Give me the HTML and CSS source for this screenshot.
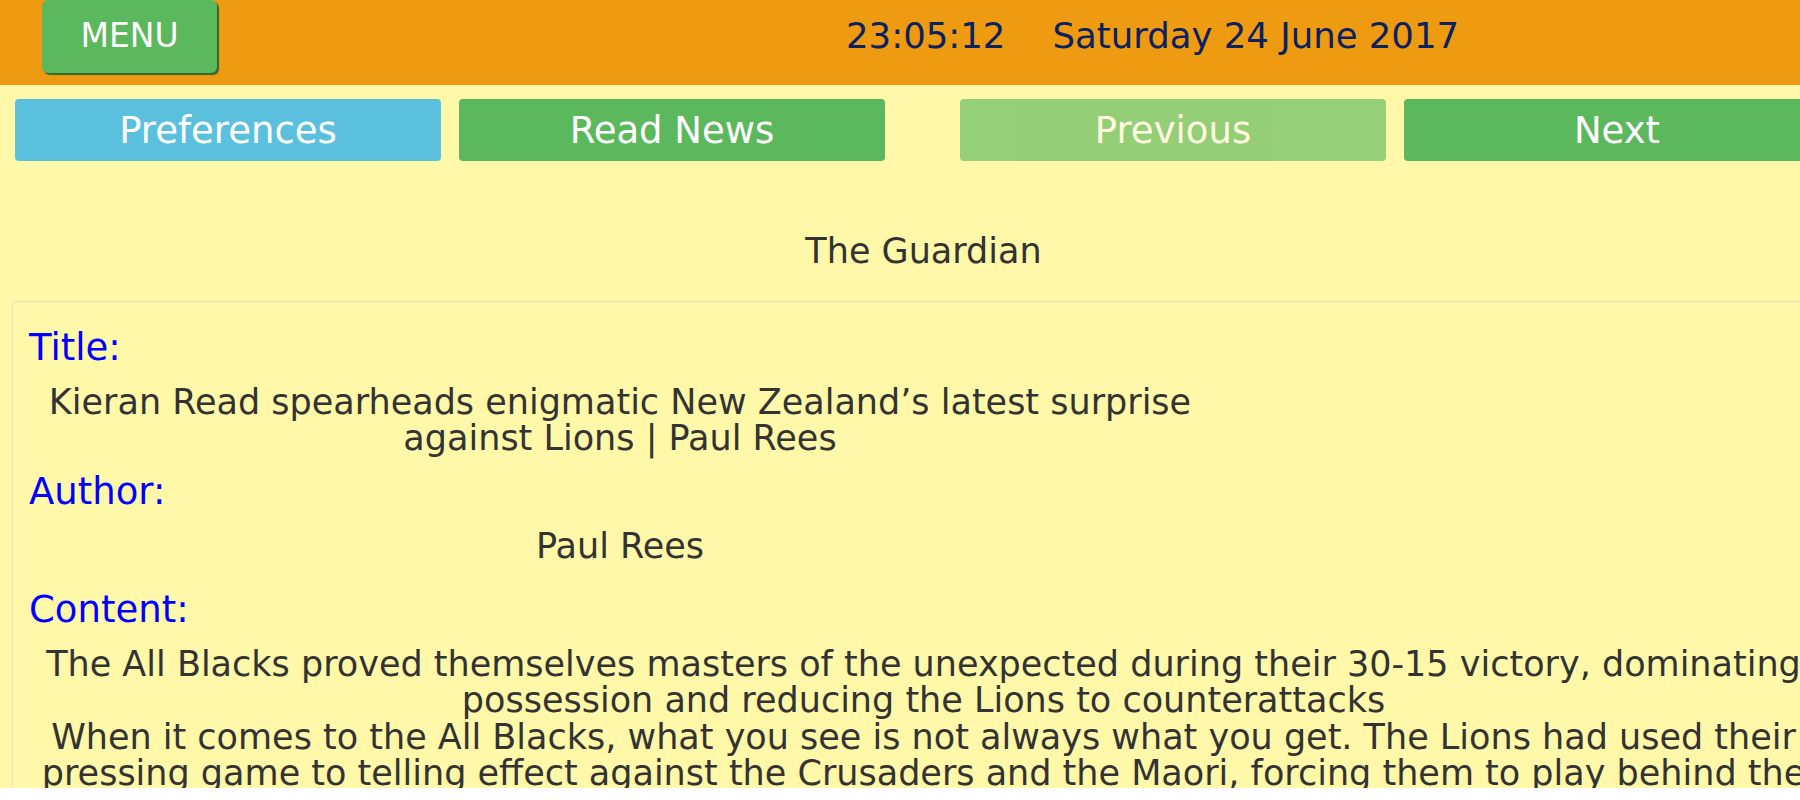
FILE: index.html
```html
<!DOCTYPE html>
<html lang="en">
<head>
<meta charset="utf-8">
<title>News Reader</title>
<link rel="stylesheet" href="styles.css">
</head>
<body>
<div class="viewport">
  <div class="page">
    <header class="topbar">
      <button class="menu-btn">MENU</button>
      <div class="clock"><span class="time">23:05:12</span><span class="date">Saturday 24 June 2017</span></div>
    </header>
    <nav class="actions">
      <div class="group">
        <a class="btn btn-info">Preferences</a>
        <a class="btn btn-success">Read News</a>
      </div>
      <div class="group">
        <a class="btn btn-success disabled">Previous</a>
        <a class="btn btn-success">Next</a>
      </div>
    </nav>
    <h2 class="source">The Guardian</h2>
    <section class="article">
      <div class="meta">
        <div class="main-col">
          <div class="label">Title:</div>
          <div class="value">Kieran Read spearheads enigmatic New Zealand’s latest surprise against Lions | Paul Rees</div>
          <div class="label">Author:</div>
          <div class="value value-last">Paul Rees</div>
        </div>
        <div class="side-col"></div>
      </div>
      <div class="label">Content:</div>
      <div class="content">The All Blacks proved themselves masters of the unexpected during their 30-15 victory, dominating possession and reducing the Lions to counterattacks<br>When it comes to the All Blacks, what you see is not always what you get. The Lions had used their pressing game to telling effect against the Crusaders and the Maori, forcing them to play behind the gain line and mistakes followed.</div>
    </section>
  </div>
</div>
</body>
</html>
```
FILE: styles.css
```css
html, body {
  margin: 0;
  padding: 0;
  background: #ffffff;
  overflow: hidden;
}

body {
  font-family: "DejaVu Sans", "Liberation Sans", sans-serif;
  color: #333333;
}

.viewport {
  height: 788px;
  overflow: hidden;
  background: #fff8a8;
}

.page {
  width: 1847px;
}

.topbar {
  height: 85px;
  background: #ee9b11;
  display: flex;
  align-items: flex-start;
  padding-left: 42px;
  box-sizing: border-box;
}

.menu-btn {
  width: 175px;
  height: 73px;
  background: #5cb85c;
  color: #ffffff;
  border: none;
  border-radius: 6px;
  box-shadow: 2px 2px 1px #2f6a2f;
  font-family: "DejaVu Sans", sans-serif;
  font-size: 33px;
  padding: 0 0 2px;
  cursor: pointer;
}

.clock {
  margin-left: 629px;
  padding-top: 16px;
  font-size: 35.5px;
  line-height: 40px;
  color: #0b2162;
  display: flex;
}

.time {
  margin-right: 47px;
}

.actions {
  display: flex;
  gap: 75px;
  padding: 14px 0 0 15px;
}

.group {
  display: flex;
  gap: 18px;
}

.btn {
  width: 426px;
  height: 62px;
  border-radius: 4px;
  color: #ffffff;
  font-size: 37px;
  display: flex;
  align-items: center;
  justify-content: center;
  cursor: pointer;
}

.btn-info {
  background: #5bc0de;
}

.btn-success {
  background: #5cb85c;
}

.btn.disabled {
  opacity: 0.65;
}

.source {
  margin: 72px 0 32px;
  text-align: center;
  font-size: 35px;
  line-height: 36px;
  font-weight: normal;
  color: #333333;
}

.article {
  margin: 0 12px;
  border: 1px solid #e6e2c6;
  border-radius: 4px;
  padding: 28px 16px 0;
}

.meta {
  display: flex;
}

.main-col {
  width: 1182px;
}

.label {
  color: #0000ff;
  font-size: 37px;
  line-height: 36px;
  margin-bottom: 18px;
}

.value {
  text-align: center;
  font-size: 35px;
  line-height: 36px;
  margin-bottom: 18px;
}

.value-last {
  margin-bottom: 28px;
}

.content {
  text-align: center;
  font-size: 35px;
  line-height: 36.3px;
}
```
